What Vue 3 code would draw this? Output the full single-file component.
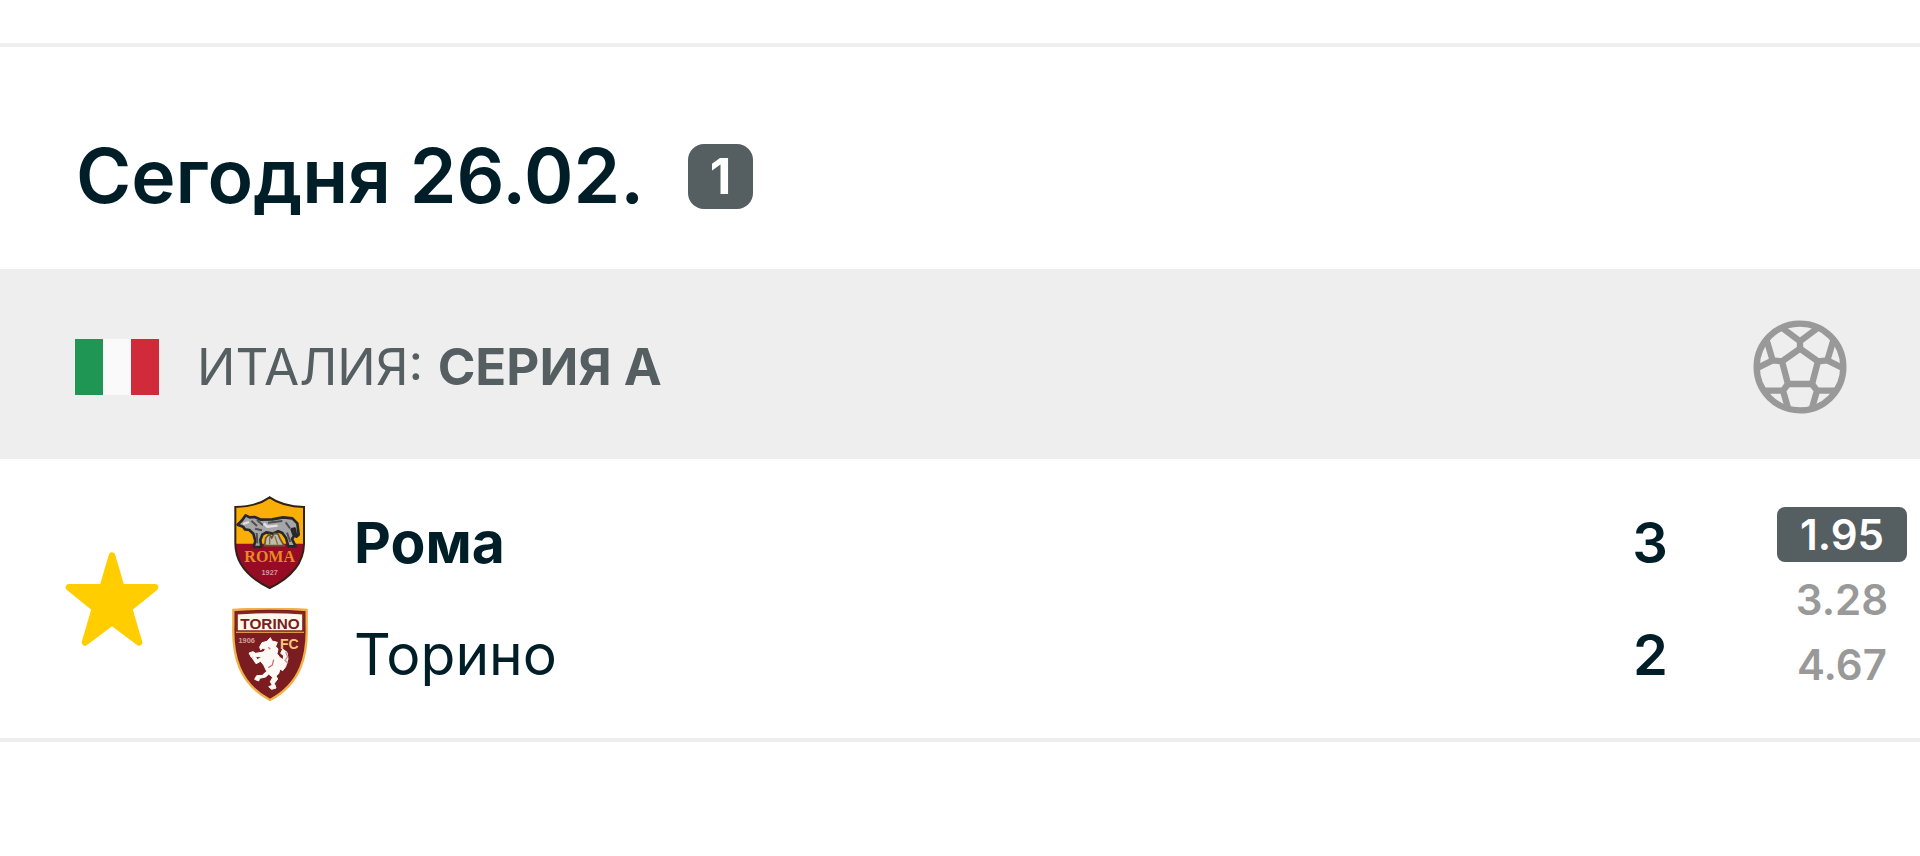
<template>
<main class="scores">
    <header class="day-header">
        <h1 class="day-title">{{ dayTitle }}</h1>
        <span class="day-count">{{ matches.length }}</span>
    </header>

    <div class="league">
        <svg class="flag" viewBox="0 0 84 56" role="img" aria-label="Италия">
            <rect width="28" height="56" fill="#1f9654" />
            <rect x="28" width="28" height="56" fill="#fafafa" />
            <rect x="56" width="28" height="56" fill="#d12a38" />
        </svg>
        <h2 class="league-name">{{ league.country }}: <strong>{{ league.name }}</strong></h2>
        <svg class="ball" viewBox="39 44 282 282" aria-hidden="true">
            <circle cx="180" cy="185" r="130" />
            <path d="M180 130 L234 168 L216 236 H144 L126 168 Z" />
            <path d="M180 130 V108 L124 66 M180 108 L236 66" />
            <path d="M126 168 L98 165 L78 98 M98 165 L52 188" />
            <path d="M234 168 L262 165 L282 98 M262 165 L308 188" />
            <path d="M144 236 L129 256 H72 M129 256 L144 308" />
            <path d="M216 236 L231 256 H288 M231 256 L216 308" />
        </svg>
    </div>

    <article v-for="match in matches" :key="match.id" class="match">
        <button
            class="star-btn"
            type="button"
            aria-label="Избранное"
            :aria-pressed="match.favorite"
            @click="match.favorite = !match.favorite"
        >
            <svg class="star" :class="{ off: !match.favorite }" viewBox="45 64 280 282">
                <path d="M185 75 L213 170 H314 L236 233 L266 335 L185 274 L104 335 L134 233 L56 170 H157 Z" />
            </svg>
        </button>

        <div class="teams">
            <div v-for="team in match.teams" :key="team.name" class="team">
                <svg v-if="team.crest === 'roma'" class="crest" viewBox="37 34 228 282" aria-hidden="true">
                    <path d="M150 38 C122 58 88 66 47 67 V178 C48 238 88 280 150 310 C212 280 252 238 253 178 V67 C212 66 178 58 150 38 Z" fill="#f9ae08" />
                    <path d="M47 177 H253 C252 238 212 280 150 310 C88 280 48 238 47 177 Z" fill="#970b25" />
                    <path d="M150 38 C122 58 88 66 47 67 V178 C48 238 88 280 150 310 C212 280 252 238 253 178 V67 C212 66 178 58 150 38 Z" fill="none" stroke="#332018" stroke-width="6" />
                    <path d="M54 120 L68 106 L78 92 L90 98 L105 97 L124 105 L158 104 L190 98 L218 101 L233 116 L237 150 L230 156 L225 132 L216 134 L223 154 L217 163 L228 185 H206 L199 160 L188 145 L176 140 L159 147 L140 143 L128 150 L122 166 L125 187 H102 L107 169 L101 147 L89 136 L76 134 L70 126 Z" fill="#a6a6a8" stroke="#29272a" stroke-width="8" stroke-linejoin="round" />
                    <path d="M95 108 L112 124 M112 106 L130 122 M145 114 L188 109 M106 132 L127 137 M198 113 L211 131 M202 144 L212 172 M111 145 L113 176" fill="none" stroke="#505052" stroke-width="6" />
                    <path d="M70 118 L88 112 M132 116 L143 126 L174 123" fill="none" stroke="#e2e2e2" stroke-width="7" />
                    <path d="M135 183 L138 160 L148 149 L156 160 L164 146 L175 148 L181 162 L193 183 Z" fill="#c2bba5" stroke="#665535" stroke-width="5" />
                    <path d="M150 158 V179 M166 155 L174 180" stroke="#77705f" stroke-width="4" />
                    <text x="150" y="231" class="roma-name">ROMA</text>
                    <text x="150" y="270" class="roma-year">1927</text>
                </svg>
                <svg v-else class="crest" viewBox="34 28 232 282" aria-hidden="true">
                    <path d="M40 34 Q150 26 260 34 V80 C263 170 243 255 150 304 C57 255 37 170 40 80 Z" fill="#7a1c20" stroke="#eeb047" stroke-width="7" />
                    <path d="M50 44 Q150 36 250 44 V98 H50 Z" fill="#fff8eb" stroke="#842522" stroke-width="7" />
                    <path d="M48 101 H252" stroke="#db994a" stroke-width="4" />
                    <text x="150" y="91" class="torino-name">TORINO</text>
                    <text x="80" y="134" class="torino-year">1906</text>
                    <text x="208" y="150" class="torino-fc">FC</text>
                    <path d="M119 145 L126 132 L141 128 L151 117 L156 127 L172 131 L167 143 L174 151 L171 165 L180 177 L189 183 L191 171 L182 164 L188 151 L201 161 L204 181 L197 204 L188 216 L180 211 L176 225 L168 232 L173 241 L163 254 L168 268 L155 272 L146 264 L157 260 L151 249 L158 236 L146 226 L137 235 L119 239 L116 247 L104 242 L110 231 L127 230 L140 218 L131 199 L122 188 L108 195 L97 178 L106 173 L112 183 L126 175 L105 173 L94 176 L87 163 L99 159 L107 164 L130 160 L137 152 L128 149 L122 154 Z" fill="#fffaf5" stroke="#fffaf5" stroke-width="3" />
                    <path d="M145 146 L151 152 M161 183 L157 199 L145 207" fill="none" stroke="#b98080" stroke-width="4" />
                    <path d="M197 161 L203 174 L195 185 L204 194" fill="none" stroke="#c89592" stroke-width="4" />
                </svg>
                <span class="team-name" :class="{ winner: team.winner }">{{ team.name }}</span>
                <span class="team-score">{{ team.score }}</span>
            </div>
        </div>

        <div class="odds">
            <span
                v-for="(odd, index) in match.odds"
                :key="index"
                class="odd"
                :class="{ active: index === match.result }"
            >{{ odd }}</span>
        </div>
    </article>
</main>
</template>

<script setup>
import { ref } from 'vue';

const dayTitle = 'Сегодня 26.02.';
const league = { country: 'ИТАЛИЯ', name: 'СЕРИЯ A' };

const matches = ref([
    {
        id: 1,
        favorite: true,
        teams: [
            { name: 'Рома', crest: 'roma', score: 3, winner: true },
            { name: 'Торино', crest: 'torino', score: 2, winner: false }
        ],
        odds: ['1.95', '3.28', '4.67'],
        result: 0
    }
]);
</script>

<style>
body {
    margin: 0;
    background: #fff;
}
</style>

<style scoped>
.scores {
    margin-top: 43px;
    border-top: 4px solid #eee;
    color: #001e28;
    font-family: Inter, "Liberation Sans", sans-serif;
}

.day-header {
    display: flex;
    align-items: center;
    gap: 44px;
    padding: 85px 76px 49px;
}

.day-title {
    margin: 0;
    font-size: 75px;
    font-weight: 600;
    line-height: 88px;
}

.day-count {
    width: 65px;
    border-radius: 16px;
    background: #555e61;
    color: #fff;
    font-size: 50px;
    font-weight: 700;
    line-height: 65px;
    text-align: center;
}

.league {
    display: flex;
    align-items: center;
    padding: 51px 73px 45px 75px;
    background: #eee;
}

.flag {
    width: 84px;
    height: 56px;
    margin-right: 38px;
}

.league-name {
    flex: 1;
    margin: 0;
    color: #555e61;
    font-size: 51px;
    font-weight: 400;
    line-height: 60px;
}

.league-name strong {
    font-weight: 700;
}

.ball {
    width: 94px;
    height: 94px;
    fill: none;
    stroke: #999;
    stroke-width: 19;
}

.match {
    display: flex;
    align-items: center;
    padding: 28px 13px 27px 65px;
    border-bottom: 4px solid #eee;
}

.star-btn {
    padding: 0;
    border: none;
    background: none;
    cursor: pointer;
}

.star {
    display: block;
    width: 94px;
    height: 94px;
    fill: #ffcd00;
    stroke: #ffcd00;
    stroke-width: 20;
    stroke-linejoin: round;
}

.star.off {
    fill: none;
    stroke: #c8cdcd;
}

.teams {
    flex: 1;
    margin: 0 109px 0 72px;
}

.team {
    display: flex;
    align-items: center;
    height: 112px;
    font-size: 57px;
    line-height: 68px;
}

.crest {
    width: 78px;
    height: 94px;
    margin-right: 45px;
}

.team-name {
    flex: 1;
}

.team-name.winner {
    font-weight: 700;
}

.team-score {
    font-size: 56px;
    font-weight: 600;
}

.odds {
    display: flex;
    flex-direction: column;
    gap: 10px;
    width: 130px;
}

.odd {
    border-radius: 8px;
    color: #999;
    font-size: 42px;
    font-weight: 600;
    line-height: 55px;
    text-align: center;
}

.odd.active {
    background: #555e61;
    color: #fff;
}

.roma-name,
.roma-year,
.torino-name,
.torino-year,
.torino-fc {
    text-anchor: middle;
}

.roma-name {
    fill: #e58b20;
    font: 700 48px "Liberation Serif", serif;
}

.roma-year {
    fill: #d694a0;
    font: 700 22px "Liberation Sans", sans-serif;
}

.torino-name {
    fill: #762020;
    font: 700 46px "Liberation Sans", sans-serif;
}

.torino-year {
    fill: #d3a39c;
    font: 700 22px "Liberation Sans", sans-serif;
}

.torino-fc {
    fill: #f8c878;
    font: 700 42px "Liberation Sans", sans-serif;
}
</style>
